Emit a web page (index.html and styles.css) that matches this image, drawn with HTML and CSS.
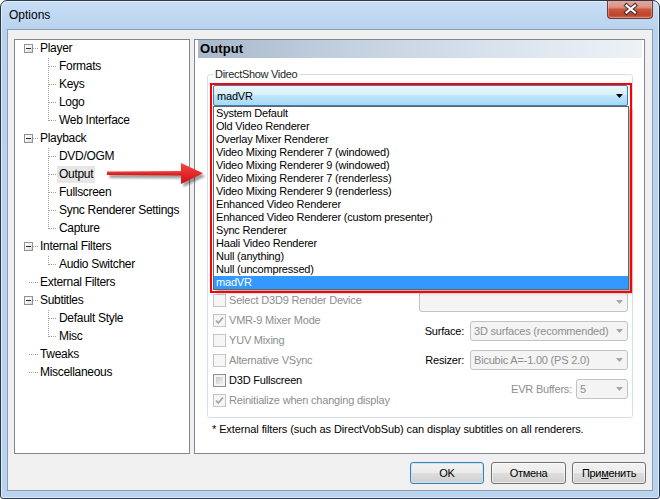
FILE: index.html
```html
<!DOCTYPE html>
<html>
<head>
<meta charset="utf-8">
<title>Options</title>
<link rel="stylesheet" href="styles.css">
</head>
<body>
<div class="window">
  <div class="titlebar">
    <span class="title">Options</span>
    <div class="close">
      <svg width="46" height="18" viewBox="0 0 46 18">
        <path d="M18.5 5.5 L27 12.5 M27 5.5 L18.5 12.5" stroke="#3b2f2e" stroke-width="4.2" stroke-linecap="square" fill="none"/>
        <path d="M18.5 5.5 L27 12.5 M27 5.5 L18.5 12.5" stroke="#ffffff" stroke-width="2.2" stroke-linecap="square" fill="none"/>
      </svg>
    </div>
  </div>
  <div class="client">
    <div class="main">
      <div class="tree">
        <div class="node">
          <div class="row root"><span class="exp"></span><span class="hd"></span><span class="lbl">Player</span></div>
          <div class="children">
            <div class="row child"><span class="hd"></span><span class="lbl">Formats</span></div>
            <div class="row child"><span class="hd"></span><span class="lbl">Keys</span></div>
            <div class="row child"><span class="hd"></span><span class="lbl">Logo</span></div>
            <div class="row child"><span class="hd"></span><span class="lbl">Web Interface</span></div>
          </div>
        </div>
        <div class="node">
          <div class="row root"><span class="exp"></span><span class="hd"></span><span class="lbl">Playback</span></div>
          <div class="children">
            <div class="row child"><span class="hd"></span><span class="lbl">DVD/OGM</span></div>
            <div class="row child"><span class="hd"></span><span class="lbl sel">Output</span></div>
            <div class="row child"><span class="hd"></span><span class="lbl">Fullscreen</span></div>
            <div class="row child"><span class="hd"></span><span class="lbl">Sync Renderer Settings</span></div>
            <div class="row child"><span class="hd"></span><span class="lbl">Capture</span></div>
          </div>
        </div>
        <div class="node">
          <div class="row root"><span class="exp"></span><span class="hd"></span><span class="lbl">Internal Filters</span></div>
          <div class="children">
            <div class="row child"><span class="hd"></span><span class="lbl">Audio Switcher</span></div>
          </div>
        </div>
        <div class="row root"><span class="hd long"></span><span class="lbl">External Filters</span></div>
        <div class="node">
          <div class="row root"><span class="exp"></span><span class="hd"></span><span class="lbl">Subtitles</span></div>
          <div class="children">
            <div class="row child"><span class="hd"></span><span class="lbl">Default Style</span></div>
            <div class="row child"><span class="hd"></span><span class="lbl">Misc</span></div>
          </div>
        </div>
        <div class="row root"><span class="hd long"></span><span class="lbl">Tweaks</span></div>
        <div class="row root"><span class="hd long"></span><span class="lbl">Miscellaneous</span></div>
      </div>

      <div class="panel">
        <div class="phead">Output</div>
        <fieldset class="group">
          <legend>DirectShow Video</legend>
          <div class="combo-wrap">
            <div class="combo open">
              <span class="ctext">madVR</span>
              <svg class="arr" width="7" height="4" viewBox="0 0 7 4"><polygon points="0,0 7,0 3.5,4" fill="#000"/></svg>
            </div>
            <ul class="dropdown">
              <li>System Default</li>
              <li>Old Video Renderer</li>
              <li>Overlay Mixer Renderer</li>
              <li>Video Mixing Renderer 7 (windowed)</li>
              <li>Video Mixing Renderer 9 (windowed)</li>
              <li>Video Mixing Renderer 7 (renderless)</li>
              <li>Video Mixing Renderer 9 (renderless)</li>
              <li>Enhanced Video Renderer</li>
              <li>Enhanced Video Renderer (custom presenter)</li>
              <li>Sync Renderer</li>
              <li>Haali Video Renderer</li>
              <li>Null (anything)</li>
              <li>Null (uncompressed)</li>
              <li class="hl">madVR</li>
            </ul>
            <div class="callout"></div>
          </div>
          <div class="hidden-area"></div>
          <div class="opts">
            <div class="checks">
              <div class="chk dis"><span class="cb"></span><span>Select D3D9 Render Device</span></div>
              <div class="chk dis"><span class="cb"><svg width="11" height="11" viewBox="0 0 11 11"><path d="M2 5.5 L4.3 8 L9 2.5" stroke="#a3a3a3" stroke-width="1.7" fill="none"/></svg></span><span>VMR-9 Mixer Mode</span></div>
              <div class="chk dis"><span class="cb"></span><span>YUV Mixing</span></div>
              <div class="chk dis"><span class="cb"></span><span>Alternative VSync</span></div>
              <div class="chk"><span class="cb on"></span><span>D3D Fullscreen</span></div>
              <div class="chk dis"><span class="cb"><svg width="11" height="11" viewBox="0 0 11 11"><path d="M2 5.5 L4.3 8 L9 2.5" stroke="#a3a3a3" stroke-width="1.7" fill="none"/></svg></span><span>Reinitialize when changing display</span></div>
            </div>
            <div class="selects">
              <div class="sel-row">
                <div class="dd w-full"><span class="dtext"></span><svg class="arr" width="7" height="4" viewBox="0 0 7 4"><polygon points="0,0 7,0 3.5,4" fill="#a6a6a6"/></svg></div>
              </div>
              <div class="sel-row">
                <span class="slabel">Surface:</span>
                <div class="dd w-mid"><span class="dtext">3D surfaces (recommended)</span><svg class="arr" width="7" height="4" viewBox="0 0 7 4"><polygon points="0,0 7,0 3.5,4" fill="#a6a6a6"/></svg></div>
              </div>
              <div class="sel-row">
                <span class="slabel">Resizer:</span>
                <div class="dd w-mid"><span class="dtext">Bicubic A=-1.00 (PS 2.0)</span><svg class="arr" width="7" height="4" viewBox="0 0 7 4"><polygon points="0,0 7,0 3.5,4" fill="#a6a6a6"/></svg></div>
              </div>
              <div class="sel-row tight">
                <span class="slabel dis">EVR Buffers:</span>
                <div class="dd w-small"><span class="dtext">5</span><svg class="arr" width="7" height="4" viewBox="0 0 7 4"><polygon points="0,0 7,0 3.5,4" fill="#a6a6a6"/></svg></div>
              </div>
            </div>
          </div>
        </fieldset>
        <p class="note">* External filters (such as DirectVobSub) can display subtitles on all renderers.</p>
      </div>
    </div>

    <div class="buttons">
      <div class="btn default">OK</div>
      <div class="btn wide">Отмена</div>
      <div class="btn">При<u>м</u>енить</div>
    </div>

    <svg class="arrow" width="104" height="34" viewBox="0 0 104 34">
      <defs>
        <filter id="blur" x="-10%" y="-40%" width="130%" height="190%"><feGaussianBlur stdDeviation="1.3"/></filter>
        <linearGradient id="red" x1="0" y1="0" x2="0" y2="1">
          <stop offset="0" stop-color="#f4473f"/>
          <stop offset="1" stop-color="#d50d12"/>
        </linearGradient>
      </defs>
      <g transform="translate(2.5,3)" fill="rgba(0,0,0,0.38)" filter="url(#blur)">
        <polygon points="0,11.5 76,11 76,15.5 0,15"/>
        <polygon points="74,3 96,13.3 74,24"/>
      </g>
      <polygon points="0,11.5 76,11 76,15.5 0,15" fill="url(#red)"/>
      <polygon points="74,3 96,13.3 74,24" fill="url(#red)"/>
    </svg>
  </div>
</div>
</body>
</html>
```

FILE: styles.css
```css
* { box-sizing: border-box; }
html, body { margin: 0; padding: 0; }
body {
  width: 660px;
  height: 499px;
  overflow: hidden;
  font-family: "Liberation Sans", Arial, sans-serif;
  font-size: 11px;
  color: #000;
  background: #fff;
}

.window {
  width: 660px;
  height: 499px;
  border: 1px solid #2a3a4c;
  border-radius: 7px 7px 3px 3px;
  background: linear-gradient(to bottom, #c7def6 0, #b9d3ef 29px, #bad4f0 100%);
  box-shadow: inset 0 0 0 1px rgba(255, 255, 255, 0.5);
  display: flex;
  flex-direction: column;
  overflow: hidden;
}

.titlebar {
  height: 28px;
  flex: none;
  display: flex;
  align-items: flex-start;
  padding: 0 6px 0 8px;
}
.title {
  font-size: 12px;
  line-height: 14px;
  margin-top: 7px;
  color: #000;
}
.close {
  margin-left: auto;
  margin-top: -1px;
  width: 46px;
  height: 19px;
  border: 1px solid #6b3b35;
  border-top: none;
  border-radius: 0 0 4px 4px;
  background: linear-gradient(to bottom, #e6a99f 0%, #dc9385 40%, #c9563f 52%, #bf4329 85%, #cf6c55 100%);
  box-shadow: inset 0 0 0 1px rgba(255, 220, 210, 0.35);
}
.close svg { display: block; }

.client {
  position: relative;
  margin: 0 6px 7px;
  height: 462px;
  border: 1px solid #8c9db2;
  background: #f0f0f0;
  padding: 9px 7px 6px 6px;
  display: flex;
  flex-direction: column;
}

.main {
  display: flex;
  gap: 4px;
  height: 415px;
  flex: none;
}

/* tree */
.tree {
  width: 176px;
  border: 1px solid #828790;
  background: #fff;
}
.row {
  height: 18px;
  display: flex;
  align-items: flex-start;
}
.row.root { padding-left: 9px; }
.row.child { padding-left: 34px; }
.exp {
  width: 9px;
  height: 9px;
  margin-top: 4px;
  border: 1px solid #919191;
  background: linear-gradient(135deg, #ffffff 0%, #f2f2f2 50%, #d8d8d8 100%);
  position: relative;
  flex: none;
}
.exp::after {
  content: "";
  position: absolute;
  left: 1px;
  top: 3px;
  width: 5px;
  height: 1px;
  background: #1e2a44;
}
.hd {
  width: 5px;
  height: 1px;
  margin-top: 8px;
  flex: none;
  background: repeating-linear-gradient(to right, #a0a0a0 0 1px, transparent 1px 2px);
}
.hd.long { width: 9px; margin-left: 5px; }
.row.child .hd { width: 8px; }
.lbl {
  font-size: 12px;
  letter-spacing: -0.3px;
  line-height: 17px;
  height: 17px;
  padding: 0 2px;
  white-space: nowrap;
}
.lbl.sel { background: #e6e6e6; }
.children {
  background-image: repeating-linear-gradient(to bottom, #a0a0a0 0 1px, transparent 1px 2px);
  background-repeat: no-repeat;
  background-position: 33px 0;
  background-size: 1px calc(100% - 9px);
}

/* panel */
.panel {
  width: 451px;
  border: 1px solid #828790;
  background: #fff;
  display: flex;
  flex-direction: column;
}
.phead {
  height: 18px;
  margin: 0 2px 0 3px;
  padding-left: 2px;
  background: linear-gradient(to right, #a8b8cc 0%, #c4d1e0 35%, #dbe4ee 70%, #eef2f7 100%);
  font-weight: bold;
  font-size: 13px;
  line-height: 18px;
  letter-spacing: 0.1px;
}

.group {
  margin: 9px 11px 0 12px;
  padding: 4px 4px 7px 5px;
  border: 1px solid #d5dfe5;
  border-radius: 3px;
  min-width: 0;
}
.group legend {
  padding: 0 2px;
  margin-left: 0;
  font-size: 11px;
  line-height: 14px;
  letter-spacing: -0.3px;
  color: #1e1e1e;
}

.combo-wrap {
  position: relative;
  height: 21px;
}
.combo {
  height: 21px;
  border: 1px solid #3c7fb1;
  border-radius: 2px;
  background: linear-gradient(to bottom, #eaf6fd 0%, #d9f0fc 45%, #bee6fd 50%, #a7d9f5 100%);
  display: flex;
  align-items: center;
  padding-left: 3px;
  letter-spacing: -0.2px;
}
.arr { margin-left: auto; margin-right: 4px; display: block; flex: none; }

.dropdown {
  position: absolute;
  left: 0;
  top: 21px;
  width: 416px;
  height: 184px;
  margin: 0;
  padding: 0;
  list-style: none;
  border: 1px solid #646464;
  background: #fff;
  box-shadow: 3px 3px 3px rgba(0, 0, 0, 0.3);
  z-index: 2;
}
.dropdown li {
  height: 13px;
  line-height: 13px;
  padding-left: 2px;
  white-space: nowrap;
  letter-spacing: -0.2px;
}
.dropdown li.hl { background: #3399ff; color: #fff; }

.callout {
  position: absolute;
  left: -3px;
  top: -2px;
  width: 422px;
  height: 210px;
  border: 2px solid #ff0000;
  z-index: 3;
  pointer-events: none;
}

.hidden-area { height: 184px; }

.opts {
  display: flex;
  justify-content: space-between;
}
.checks { display: flex; flex-direction: column; }
.chk {
  height: 20px;
  display: flex;
  align-items: center;
  gap: 3px;
  letter-spacing: -0.2px;
  white-space: nowrap;
}
.chk.dis { color: #8d8d8d; }
.cb {
  width: 13px;
  height: 13px;
  flex: none;
  border: 1px solid #c5c5c5;
  background: #f6f6f6;
  display: flex;
  align-items: center;
  justify-content: center;
}
.cb svg { display: block; }
.cb.on {
  border-color: #8e8f8f;
  background: linear-gradient(135deg, #b4b8be 0%, #dfe1e4 55%, #f7f7f7 100%);
  box-shadow: inset 0 0 0 2px #f4f4f4;
}

.selects {
  width: 209px;
  padding-top: 2px;
  display: flex;
  flex-direction: column;
  align-items: flex-end;
  gap: 9px;
}
.sel-row {
  height: 20px;
  display: flex;
  align-items: center;
  gap: 6px;
  letter-spacing: -0.2px;
  white-space: nowrap;
}
.sel-row.tight { gap: 4px; }
.slabel.dis { color: #8d8d8d; }
.dd {
  height: 20px;
  border: 1px solid #c2c2c2;
  border-radius: 3px;
  background: #f4f4f4;
  color: #8d8d8d;
  display: flex;
  align-items: center;
  padding-left: 3px;
  overflow: hidden;
}
.w-full { width: 209px; }
.w-mid { width: 158px; }
.w-small { width: 52px; }

.note {
  margin: 4px 0 0 17px;
  line-height: 14px;
  letter-spacing: -0.1px;
  white-space: nowrap;
}

/* buttons */
.buttons {
  margin-top: 8px;
  margin-right: -1px;
  display: flex;
  justify-content: flex-end;
  gap: 6px;
}
.btn {
  width: 74px;
  height: 22px;
  border: 1px solid #707070;
  border-radius: 3px;
  background: linear-gradient(to bottom, #f2f2f2 0%, #ebebeb 50%, #dddddd 51%, #cfcfcf 100%);
  box-shadow: inset 0 0 0 1px rgba(255, 255, 255, 0.6);
  display: flex;
  align-items: center;
  justify-content: center;
  letter-spacing: -0.3px;
}
.btn.wide { width: 75px; }
.btn.default {
  margin-right: 1px;
  border-color: #3c7fb1;
  box-shadow: inset 0 0 0 1px #c4e6f7;
}
.btn u { text-decoration: underline; }

.arrow {
  position: absolute;
  left: 99px;
  top: 130px;
  z-index: 4;
}
```
